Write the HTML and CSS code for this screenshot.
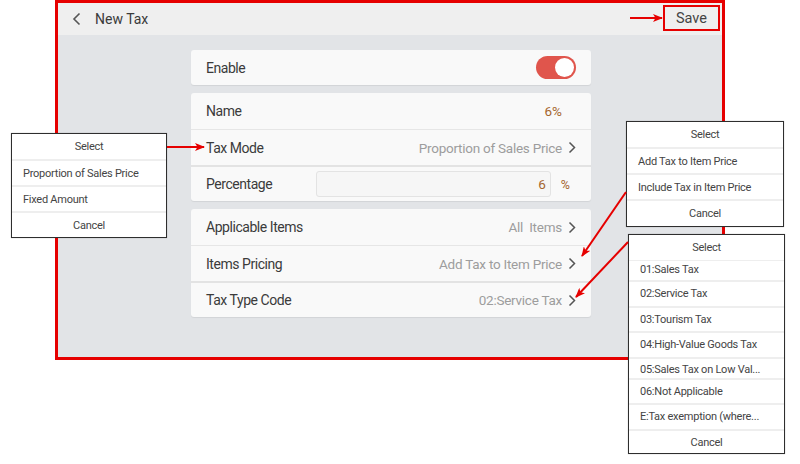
FILE: index.html
```html
<!DOCTYPE html>
<html lang="en">
<head>
<meta charset="utf-8">
<title>New Tax</title>
<link rel="stylesheet" href="styles.css">
</head>
<body>
<div class="frame">
  <header class="topbar">
    <svg class="back" width="10" height="14" viewBox="0 0 10 14"><path d="M7.5 1.5 L2 7 L7.5 12.5" fill="none" stroke="#555" stroke-width="1.6"/></svg>
    <span class="title">New Tax</span>
    <span class="save">Save</span>
  </header>
  <main class="content">
    <section class="card card-enable">
      <div class="row row-enable">
        <span class="label">Enable</span>
        <span class="toggle"><span class="knob"></span></span>
      </div>
    </section>
    <section class="card card-group">
      <div class="row row-a">
        <span class="label">Name</span>
        <span class="accent end">6%</span>
      </div>
      <div class="row sep">
        <span class="label">Tax Mode</span>
        <span class="value">Proportion of Sales Price</span>
        <svg class="chev" width="8" height="13" viewBox="0 0 8 13"><path d="M1.5 1.5 L6.5 6.5 L1.5 11.5" fill="none" stroke="#555" stroke-width="1.5"/></svg>
      </div>
      <div class="row sep2">
        <span class="label">Percentage</span>
        <span class="input">6</span>
        <span class="accent pct">%</span>
      </div>
    </section>
    <section class="card card-group">
      <div class="row row-a">
        <span class="label">Applicable Items</span>
        <span class="value">All&nbsp;&nbsp;Items</span>
        <svg class="chev" width="8" height="13" viewBox="0 0 8 13"><path d="M1.5 1.5 L6.5 6.5 L1.5 11.5" fill="none" stroke="#555" stroke-width="1.5"/></svg>
      </div>
      <div class="row sep">
        <span class="label">Items Pricing</span>
        <span class="value">Add Tax to Item Price</span>
        <svg class="chev" width="8" height="13" viewBox="0 0 8 13"><path d="M1.5 1.5 L6.5 6.5 L1.5 11.5" fill="none" stroke="#555" stroke-width="1.5"/></svg>
      </div>
      <div class="row sep2">
        <span class="label">Tax Type Code</span>
        <span class="value">02:Service Tax</span>
        <svg class="chev" width="8" height="13" viewBox="0 0 8 13"><path d="M1.5 1.5 L6.5 6.5 L1.5 11.5" fill="none" stroke="#555" stroke-width="1.5"/></svg>
      </div>
    </section>
  </main>
</div>

<div class="popup popup-mode">
  <div class="opt head">Select</div>
  <div class="opt">Proportion of Sales Price</div>
  <div class="opt">Fixed Amount</div>
  <div class="opt foot">Cancel</div>
</div>

<div class="popup popup-pricing">
  <div class="opt head">Select</div>
  <div class="opt">Add Tax to Item Price</div>
  <div class="opt">Include Tax in Item Price</div>
  <div class="opt foot">Cancel</div>
</div>

<div class="popup popup-code">
  <div class="opt head">Select</div>
  <div class="opt short">01:Sales Tax</div>
  <div class="opt">02:Service Tax</div>
  <div class="opt">03:Tourism Tax</div>
  <div class="opt">04:High-Value Goods Tax</div>
  <div class="opt low">05:Sales Tax on Low Val...</div>
  <div class="opt">06:Not Applicable</div>
  <div class="opt">E:Tax exemption (where...</div>
  <div class="opt foot">Cancel</div>
</div>

<svg class="arrows" width="800" height="464" viewBox="0 0 800 464">
  <defs>
    <marker id="ah" markerWidth="10" markerHeight="8" refX="9" refY="4" orient="auto" markerUnits="userSpaceOnUse">
      <path d="M0 0 L10 4 L0 8 L2.5 4 Z" fill="#e60000"/>
    </marker>
  </defs>
  <g stroke="#e60000" stroke-width="2" fill="none">
    <line x1="630" y1="18" x2="662" y2="18" marker-end="url(#ah)"/>
    <line x1="167" y1="147" x2="204" y2="147" marker-end="url(#ah)"/>
    <line x1="626" y1="192" x2="582" y2="256" marker-end="url(#ah)"/>
    <line x1="628" y1="242" x2="576" y2="297" marker-end="url(#ah)"/>
  </g>
</svg>
</body>
</html>
```

FILE: styles.css
```css
* { box-sizing: border-box; }

html, body {
  margin: 0;
  padding: 0;
  background: #ffffff;
  font-family: Roboto, "Noto Sans", "Liberation Sans", sans-serif;
  color: #3b3b3b;
}

body {
  position: relative;
  width: 800px;
  height: 464px;
  overflow: hidden;
}

.frame {
  margin-left: 55px;
  width: 670px;
  height: 360px;
  border: 3px solid #e60000;
  display: flex;
  flex-direction: column;
  background: #e2e4e7;
}

.topbar {
  height: 32px;
  flex: none;
  background: #efefef;
  display: flex;
  align-items: center;
  padding: 0 2px 0 14px;
}

.back { flex: none; }

.title {
  margin-left: 13px;
  font-size: 14px;
  color: #3a3a3a;
}

.save {
  margin-left: auto;
  align-self: flex-start;
  margin-top: 2px;
  width: 57px;
  height: 26px;
  border: 2px solid #e60000;
  display: flex;
  align-items: center;
  justify-content: center;
  font-size: 14.5px;
  color: #444;
}

.content {
  flex: 1;
  padding: 15px 0 0 2px;
  display: flex;
  flex-direction: column;
  align-items: center;
}

.card {
  flex: none;
  width: 400px;
  background: #f9f9f9;
  border-radius: 3px;
  box-shadow: 0 1px 1px rgba(0, 0, 0, 0.07);
}

.card-group { margin-top: 8px; }

.row {
  display: flex;
  align-items: center;
  padding: 0 15px;
  font-size: 14px;
}

.row-enable { height: 35px; }
.row-a { height: 36px; }

.sep { border-top: 1px solid #e6e6e6; height: 36px; }
.sep2 { border-top: 2px solid #e3e3e3; height: 36px; }

.label {
  color: #3b3b3b;
  letter-spacing: -0.45px;
}

.value {
  margin-left: auto;
  font-size: 13.5px;
  letter-spacing: -0.25px;
  color: #9d9d9d;
}

.chev {
  flex: none;
  margin-left: 6px;
}

.accent {
  color: #a5662e;
  font-size: 13.5px;
}

.end {
  margin-left: auto;
  margin-right: 14px;
}

.input {
  margin-left: auto;
  width: 235px;
  height: 26px;
  background: #f6f6f6;
  border: 1px solid #e3e3e3;
  border-radius: 3px;
  display: flex;
  align-items: center;
  justify-content: flex-end;
  padding-right: 4px;
  color: #a5662e;
  font-size: 13.5px;
}

.pct {
  margin-left: 10px;
  margin-right: 6px;
  font-size: 12.5px;
}

.toggle {
  margin-left: auto;
  width: 40px;
  height: 23px;
  border-radius: 12px;
  background: #e0554c;
  display: flex;
  align-items: center;
  justify-content: flex-end;
  padding-right: 2px;
}

.knob {
  width: 19px;
  height: 19px;
  border-radius: 50%;
  background: #ffffff;
}

.popup {
  position: absolute;
  background: #ffffff;
  border: 1px solid #2e2e2e;
  display: flex;
  flex-direction: column;
  font-size: 11px;
  letter-spacing: -0.25px;
  color: #444;
  box-shadow: 0 0 1px rgba(0,0,0,0.3);
}

.opt {
  height: 26px;
  flex: none;
  display: flex;
  align-items: center;
  padding-left: 11px;
  border-top: 2px solid #eeeeee;
}

.opt.head {
  border-top: none;
  justify-content: center;
  padding-left: 0;
  height: 25px;
}

.opt.foot {
  justify-content: center;
  padding-left: 0;
}

.popup-mode {
  left: 11px;
  top: 133px;
  width: 156px;
  height: 105px;
}

.popup-pricing {
  left: 626px;
  top: 121px;
  width: 158px;
  height: 106px;
}

.popup-code {
  left: 628px;
  top: 234px;
  width: 157px;
  height: 220px;
}

.popup-code .opt { height: 25.5px; }
.popup-code .opt.head { height: 25px; }
.popup-code .opt.short { height: 20px; border-top: 1px solid #eeeeee; align-items: flex-end; padding-bottom: 4px; }
.popup-code .opt.low { height: 21px; align-items: flex-end; padding-bottom: 2px; }
.popup-code .opt.foot { height: 25px; }

.arrows {
  position: absolute;
  left: 0;
  top: 0;
  pointer-events: none;
}
```
